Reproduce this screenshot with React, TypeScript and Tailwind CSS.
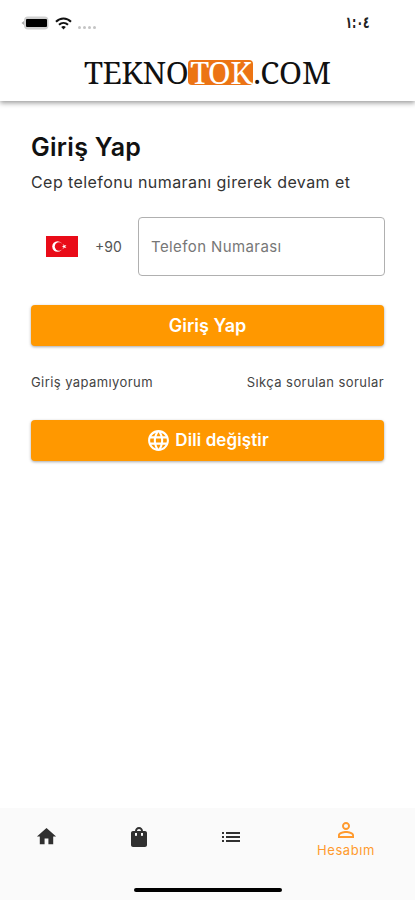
import React from "react";
import {
  MdHome,
  MdLanguage,
  MdList,
  MdPersonOutline,
  MdShoppingBag,
} from "react-icons/md";

const StatusBar: React.FC = () => (
  <div className="flex h-[46px] items-center justify-between pl-[21px] pr-[45px]">
    <div className="flex items-center">
      <svg width="28" height="14" viewBox="0 0 28 14">
        <path d="M3 5 L0.5 7 L3 9Z" fill="#aaa" />
        <rect x="3" y="0.5" width="24.5" height="13" rx="4" fill="#d0d0d0" />
        <rect x="5" y="3" width="21" height="8" rx="1" fill="#000" />
      </svg>
      <svg className="ml-[6px]" width="17" height="13" viewBox="0 0 17 13" fill="none" stroke="#111" strokeWidth="2">
        <path d="M1 4.7C5.2 0.4 11.8 0.4 16 4.7" />
        <path d="M4 7.8C6.6 5.3 10.4 5.3 13 7.8" />
        <path d="M6.2 9.9C7.6 8.8 9.4 8.8 10.8 9.9L8.5 12.4Z" fill="#111" stroke="none" />
      </svg>
      <div className="ml-[6px] mt-[8px] flex gap-[2px]">
        <span className="size-[3px] rounded-full bg-[#c4c4c4]" />
        <span className="size-[3px] rounded-full bg-[#c4c4c4]" />
        <span className="size-[3px] rounded-full bg-[#c4c4c4]" />
        <span className="size-[3px] rounded-full bg-[#c4c4c4]" />
      </div>
    </div>
    <span className="origin-right scale-x-[0.68] font-['DejaVu_Sans',sans-serif] text-[16px] font-bold leading-none text-[#222]">
      ١:٠٤
    </span>
  </div>
);

const Logo: React.FC = () => (
  <div className="flex h-[54px] items-center justify-center whitespace-nowrap pb-[1px] font-['Noto_Serif','Liberation_Serif',serif] text-[31px] leading-none text-[#111]">
    <span className="tracking-[-0.5px]">TEKNO</span>
    <span className="flex h-[25px] w-[65px] items-center justify-center rounded-[4px] bg-[#ec7414] tracking-[-0.7px] text-white">
      TOK
    </span>
    <span className="tracking-[-0.1px]">.COM</span>
  </div>
);

const Flag: React.FC = () => (
  <svg width="32" height="21" viewBox="0 0 32 21">
    <rect width="32" height="21" fill="#e90b18" />
    <circle cx="11.5" cy="10.5" r="5.3" fill="#fff" />
    <circle cx="13" cy="10.5" r="4.2" fill="#e90b18" />
    <path
      d="M15.6 10.5L17.4 9.9V8L18.5 9.5L20.4 8.9L19.2 10.5L20.4 12.1L18.5 11.5L17.4 13V11.1Z"
      fill="#fff"
    />
  </svg>
);

const LoginForm: React.FC = () => (
  <main className="flex-1 pl-[31px] pr-[30px] pt-[30px]">
    <h1 className="h-[32px] text-[25px] font-semibold leading-[32px] tracking-[0.3px] text-[#111]">
      Giriş Yap
    </h1>
    <p className="mt-[7px] h-[24px] whitespace-nowrap text-[16px] leading-[24px] tracking-[0.43px] text-[#333]">
      Cep telefonu numaranı girerek devam et
    </p>

    <div className="mt-[22px] flex h-[60px] items-center">
      <div className="flex w-[107px] items-center pl-[15px]">
        <Flag />
        <span className="ml-[17px] text-[14px] text-[#555]">+90</span>
      </div>
      <input
        type="tel"
        placeholder="Telefon Numarası"
        className="h-[59px] w-[247px] rounded-[4px] border border-[#b0b0b0] px-[12px] text-[15px] tracking-[0.4px] placeholder:text-[#777] focus:outline-none"
      />
    </div>

    <button
      type="button"
      className="mt-[29px] flex h-[41px] w-[353px] items-center justify-center rounded-[4px] bg-[#ff9800] text-[18px] font-semibold text-white shadow-[0_1px_3px_rgba(0,0,0,0.35)]"
    >
      Giriş Yap
    </button>

    <div className="mt-[27px] flex h-[20px] w-[353px] items-center justify-between text-[13px] tracking-[0.42px] text-[#444]">
      <a>Giriş yapamıyorum</a>
      <a>Sıkça sorulan sorular</a>
    </div>

    <button
      type="button"
      className="mt-[27px] flex h-[41px] w-[353px] items-center justify-center gap-[4px] rounded-[4px] bg-[#ff9800] text-[17px] font-semibold tracking-[0.1px] text-white shadow-[0_1px_3px_rgba(0,0,0,0.35)]"
    >
      <MdLanguage size={25} />
      Dili değiştir
    </button>
  </main>
);

const BottomNav: React.FC = () => (
  <footer className="flex h-[92px] flex-col items-center justify-between bg-[#fafafa] pb-[8px]">
    <nav className="flex w-full text-[#303030]">
      <div className="flex h-[57px] w-[92px] items-center justify-center">
        <MdHome size={23} />
      </div>
      <div className="flex h-[57px] w-[92px] items-center justify-center pl-[1px]">
        <MdShoppingBag size={24} />
      </div>
      <div className="flex h-[57px] w-[92px] items-center justify-center pl-[2px]">
        <MdList size={24} />
      </div>
      <div className="flex h-[57px] w-[139px] flex-col items-center pt-[10px] text-[#ff9a2e]">
        <MdPersonOutline size={24} />
        <span className="pl-[1px] text-[13px] leading-[16px] tracking-[0.6px]">Hesabım</span>
      </div>
    </nav>
    <div className="h-[4px] w-[148px] rounded-full bg-black" />
  </footer>
);

const App: React.FC = () => {
  return (
    <div className="flex h-[900px] w-[415px] flex-col overflow-hidden bg-white font-['Inter',sans-serif]">
      <header className="h-[101px] shrink-0 bg-white shadow-[0_2px_5px_rgba(0,0,0,0.4)]">
        <StatusBar />
        <Logo />
      </header>
      <LoginForm />
      <BottomNav />
    </div>
  );
};

export default App;
